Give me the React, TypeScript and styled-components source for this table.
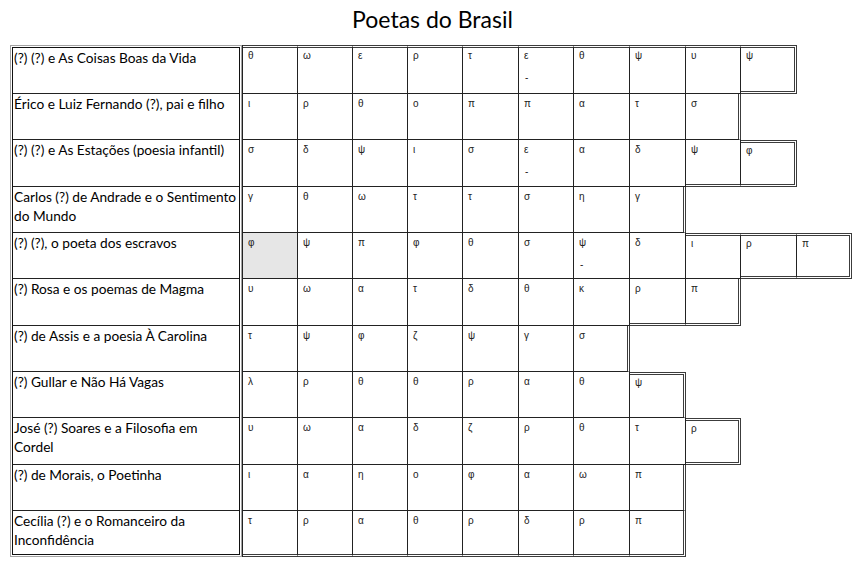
import React from 'react';
import styled, { createGlobalStyle } from 'styled-components';

const GlobalStyle = createGlobalStyle`
  html, body { margin: 0; padding: 0; background: #ffffff; }
  body { font-family: Lato, "Open Sans", sans-serif; color: #000; }
`;

type Side = 'single' | 'double' | 'none';

const LINE = '#222';
const DOUBLE = '3px double #3c3c3c';

const Page = styled.div`
  width: 865px;
  height: 569px;
  overflow: hidden;
`;

const Title = styled.h1`
  margin: 0;
  height: 45px;
  line-height: 38px;
  text-align: center;
  font-family: Lato, sans-serif;
  font-size: 23px;
  font-weight: 400;
  color: #000;
`;

const Board = styled.div`
  display: flex;
  align-items: flex-start;
  padding-left: 10px;
`;

const ClueFrame = styled.div`
  width: 232px;
  box-sizing: border-box;
  border: 1px solid #a3a3a3;
  padding: 1px;
`;

const ClueTable = styled.div`
  display: flex;
  flex-direction: column;
  border: 1px solid #111;
`;

const ClueRow = styled.div<{ $h: number; $last: boolean }>`
  height: ${(p) => p.$h}px;
  box-sizing: border-box;
  border-bottom: ${(p) => (p.$last ? 'none' : `1px solid ${LINE}`)};
  padding: 1px 0 0 1px;
  font-family: Lato, sans-serif;
  font-size: 13.7px;
  line-height: 18.5px;
  color: #000;
  white-space: nowrap;
`;

const ClueLine = styled.div``;

const Grid = styled.div`
  display: flex;
  flex-direction: column;
  border-left: 1px solid ${LINE};
`;

const GridRow = styled.div<{ $h: number }>`
  display: flex;
  height: ${(p) => p.$h}px;
`;

const sideStyle = (s: Side) =>
  s === 'double' ? DOUBLE : s === 'single' ? `1px solid ${LINE}` : 'none';

const Cell = styled.div<{
  $w: number;
  $top: Side;
  $right: Side;
  $bottom: Side;
  $shade: boolean;
}>`
  width: ${(p) => p.$w}px;
  height: 100%;
  box-sizing: border-box;
  flex: none;
  border-top: ${(p) => sideStyle(p.$top)};
  border-right: ${(p) => sideStyle(p.$right)};
  border-bottom: ${(p) => sideStyle(p.$bottom)};
  background: ${(p) => (p.$shade ? '#e6e6e6' : 'transparent')};
  padding-left: 5px;
  font-family: "Liberation Sans", "DejaVu Sans", sans-serif;
  font-size: 10px;
  line-height: 20px;
  color: #222;
`;

const Letter = styled.div<{ $raised: boolean }>`
  margin-top: ${(p) => (p.$raised ? -2 : 0)}px;
`;

const Dash = styled.div`
  margin-top: 2px;
  padding-left: 1px;
`;

const clues: string[][] = [
  ['(?) (?) e As Coisas Boas da Vida'],
  ['Érico e Luiz Fernando (?), pai e filho'],
  ['(?) (?) e As Estações (poesia infantil)'],
  ['Carlos (?) de Andrade e o Sentimento', 'do Mundo'],
  ['(?) (?), o poeta dos escravos'],
  ['(?) Rosa e os poemas de Magma'],
  ['(?) de Assis e a poesia À Carolina'],
  ['(?) Gullar e Não Há Vagas'],
  ['José (?) Soares e a Filosofia em', 'Cordel'],
  ['(?) de Morais, o Poetinha'],
  ['Cecília (?) e o Romanceiro da', 'Inconfidência'],
];

const letters: string[][] = [
  ['θ', 'ω', 'ε', 'ρ', 'τ', 'ε', 'θ', 'ψ', 'υ', 'ψ'],
  ['ι', 'ρ', 'θ', 'ο', 'π', 'π', 'α', 'τ', 'σ'],
  ['σ', 'δ', 'ψ', 'ι', 'σ', 'ε', 'α', 'δ', 'ψ', 'φ'],
  ['γ', 'θ', 'ω', 'τ', 'τ', 'σ', 'η', 'γ'],
  ['φ', 'ψ', 'π', 'φ', 'θ', 'σ', 'ψ', 'δ', 'ι', 'ρ', 'π'],
  ['υ', 'ω', 'α', 'τ', 'δ', 'θ', 'κ', 'ρ', 'π'],
  ['τ', 'ψ', 'φ', 'ζ', 'ψ', 'γ', 'σ'],
  ['λ', 'ρ', 'θ', 'θ', 'ρ', 'α', 'θ', 'ψ'],
  ['υ', 'ω', 'α', 'δ', 'ζ', 'ρ', 'θ', 'τ', 'ρ'],
  ['ι', 'α', 'η', 'ο', 'φ', 'α', 'ω', 'π'],
  ['τ', 'ρ', 'α', 'θ', 'ρ', 'δ', 'ρ', 'π'],
];

const dashes = new Set(['0-5', '2-5', '4-6']);
const shaded = new Set(['4-0']);

const colWidths = [55, 55, 55, 55, 56, 55, 56, 56, 55, 56, 55];
const clueHeights = [46, 46, 47, 46, 46, 47, 46, 46, 47, 46, 43];
const gridHeights = [49, 46, 47, 46, 46, 47, 46, 46, 47, 46, 46];

export default function App() {
  return (
    <Page>
      <GlobalStyle />
      <Title>Poetas do Brasil</Title>
      <Board>
        <ClueFrame>
          <ClueTable>
            {clues.map((lines, r) => (
              <ClueRow key={r} $h={clueHeights[r]} $last={r === clues.length - 1}>
                {lines.map((l, i) => (
                  <ClueLine key={i}>{l}</ClueLine>
                ))}
              </ClueRow>
            ))}
          </ClueTable>
        </ClueFrame>
        <Grid>
          {letters.map((row, r) => {
            const prevLen = r === 0 ? 0 : letters[r - 1].length;
            const nextLen = r === letters.length - 1 ? 0 : letters[r + 1].length;
            return (
              <GridRow key={r} $h={gridHeights[r]}>
                {row.map((ch, c) => {
                  const top: Side = c >= prevLen ? 'double' : 'none';
                  const right: Side = c === row.length - 1 ? 'double' : 'single';
                  const bottom: Side = c >= nextLen ? 'double' : 'single';
                  const key = `${r}-${c}`;
                  return (
                    <Cell
                      key={c}
                      $w={colWidths[c]}
                      $top={top}
                      $right={right}
                      $bottom={bottom}
                      $shade={shaded.has(key)}
                    >
                      <Letter $raised={top === 'double'}>{ch}</Letter>
                      {dashes.has(key) && <Dash>-</Dash>}
                    </Cell>
                  );
                })}
              </GridRow>
            );
          })}
        </Grid>
      </Board>
    </Page>
  );
}
